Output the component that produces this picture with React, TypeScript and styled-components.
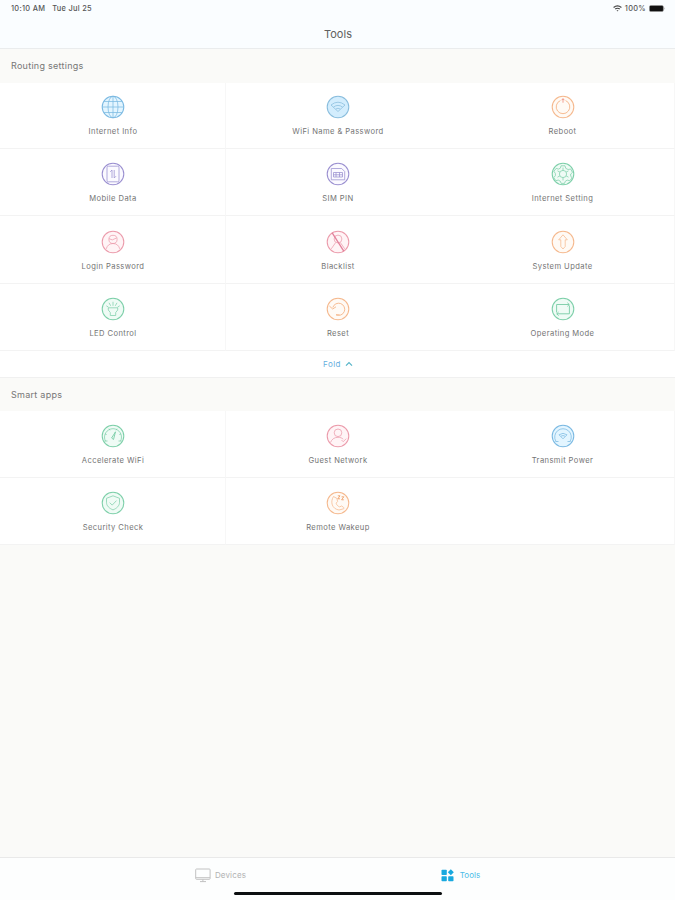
import React from "react";
import styled, { createGlobalStyle } from "styled-components";

const GlobalStyle = createGlobalStyle`
  * { box-sizing: border-box; }
  body { margin: 0; background: #fafaf8; font-family: Inter, "Liberation Sans", sans-serif; }
`;

const Screen = styled.div`
  width: 100%;
  height: 900px;
  display: flex;
  flex-direction: column;
  overflow: hidden;
  background: #fafaf8;
`;

const Header = styled.header`
  height: 49px;
  flex: none;
  display: flex;
  flex-direction: column;
  background: #fafdff;
  border-bottom: 1px solid #eaeced;
`;

const StatusBar = styled.div`
  height: 17px;
  flex: none;
  display: flex;
  align-items: center;
  justify-content: space-between;
  padding: 0 9px 0 11px;
  font-size: 7.4px;
  font-weight: 500;
  letter-spacing: 0.3px;
  color: #555;
`;

const StatusGroup = styled.div<{ $gap: number }>`
  display: flex;
  align-items: center;
  gap: ${(p) => p.$gap}px;
`;

const Title = styled.h1`
  margin: 0;
  height: 31px;
  flex: none;
  line-height: 34px;
  padding-left: 1px;
  text-align: center;
  font-size: 11px;
  font-weight: 400;
  letter-spacing: 0.05px;
  color: #606060;
`;

const SectionTitle = styled.h2<{ $height: number }>`
  margin: 0;
  flex: none;
  height: ${(p) => p.$height}px;
  line-height: ${(p) => p.$height}px;
  padding-left: 11px;
  font-size: 9px;
  font-weight: 400;
  letter-spacing: 0.27px;
  color: #777;
`;

const Grid = styled.div<{ $rows: string }>`
  flex: none;
  display: grid;
  grid-template-columns: 226px 224px 225px;
  grid-template-rows: ${(p) => p.$rows};
  background: #fff;
`;

const Cell = styled.div`
  display: flex;
  flex-direction: column;
  align-items: center;
  justify-content: flex-end;
  padding: 0 0 9px 1px;
  border-right: 1px solid #f7f7f7;
  border-bottom: 1px solid #f3f3f3;

  &:nth-child(3n + 2) {
    padding-left: 0;
    border-right: 0;
  }
`;

const Label = styled.span`
  margin-top: 6px;
  height: 14px;
  line-height: 14px;
  font-size: 7.6px;
  letter-spacing: 0.41px;
  white-space: nowrap;
  color: #747474;
`;

const FoldBar = styled.div`
  flex: none;
  height: 27px;
  display: flex;
  align-items: center;
  justify-content: center;
  gap: 4px;
  padding-left: 1px;
  background: #fff;
  border-bottom: 1px solid #f0f0f0;
  font-size: 8px;
  letter-spacing: 0.45px;
  color: #66aede;
`;

const Footer = styled.footer`
  flex: none;
  margin-top: auto;
  height: 43px;
  display: flex;
  flex-direction: column;
  align-items: center;
  background: #fdfefe;
  border-top: 1px solid #e9e9e9;
`;

const Tabs = styled.nav`
  width: 100%;
  height: 34px;
  flex: none;
  display: grid;
  grid-template-columns: 220px 220px;
  column-gap: 20px;
  justify-content: center;
  padding-left: 6px;
`;

const Tab = styled.div<{ $active?: boolean }>`
  display: flex;
  align-items: center;
  justify-content: center;
  gap: ${(p) => (p.$active ? 6 : 4)}px;
  font-size: 8px;
  letter-spacing: ${(p) => (p.$active ? 0.05 : 0.15)}px;
  color: ${(p) => (p.$active ? "#4cbce8" : "#b2b2b2")};
`;

const HomeIndicator = styled.div`
  width: 208px;
  height: 3px;
  flex: none;
  border-radius: 2px;
  background: #0c0f10;
`;

const palette = {
  blue: ["#7bb9e2", "#e3f5ff"],
  sky: ["#89bddd", "#d3edfd"],
  orange: ["#f5b88d", "#fffaf5"],
  purple: ["#9a8fd0", "#fbfaff"],
  green: ["#7dcfa9", "#effbf5"],
  red: ["#eb9bab", "#fff4f6"],
};

type Tone = keyof typeof palette;

const glyphs = {
  globe: (
    <>
      <ellipse cx="12" cy="12" rx="5" ry="10.8" />
      <path d="M12 1v22M1 12h22M3.2 6.5h17.6M3.2 17.5h17.6" />
    </>
  ),
  wifi: <path d="M5 10q7-5.6 14 0l-7 6.5zM7.5 12q4.5-3.2 9 0M9.8 14q2.2-1.5 4.4 0" />,
  reboot: (
    <>
      <path d="M9.4 5.6a6.8 6.8 0 1 0 5.2 0" strokeWidth="0.95" />
      <path d="M12 3.7v4M10.6 5.2L12 3.7l1.4 1.5" stroke="#ee8072" />
    </>
  ),
  mobile: (
    <>
      <rect x="6" y="4.2" width="12" height="15.6" rx="1.5" />
      <path d="M11 16V8L9.2 9.8M13.2 8v8l1.8-1.8" />
    </>
  ),
  sim: (
    <>
      <path d="M5.3 6.5h10.4l3 3v8.3H5.3z" />
      <path d="M7.5 10.5h9v4.5h-9zM10 10.5V15M13.5 10.5V15M7.5 12.8h9" />
    </>
  ),
  gear: (
    <>
      <circle cx="12" cy="12" r="3.6" />
      <path d="M10 3.8h4l.8 2.6 2.3 1.1 2.6-.5 1.8 3.4-1.8 1.6v2l1.4 2-2.4 2.7-2.5-.6-2 1.3-.7 2h-3.3l-.9-2.2-2-1.1-2.5.6-2-3.1 1.6-2v-2L2.9 9.2l2.3-2.8 2.4.7 1.8-1z" />
      <path d="M12 5.6v2.8M12 15.6v2.8M6.5 8.8l2.4 1.4M15.1 13.8l2.4 1.4M6.5 15.2l2.4-1.4M15.1 10.2l2.4-1.4" />
    </>
  ),
  user: (
    <>
      <circle cx="12" cy="9.4" r="4.1" />
      <path d="M5.3 18.8c.7-3 3-5.3 6.7-5.3s6 2.3 6.7 5.3M8 8.7l3.3 1.2 4.4-2" />
    </>
  ),
  blocked: (
    <>
      <circle cx="12" cy="9" r="3.9" />
      <path d="M5.3 18.8l4.4-6.3M14.3 12.5l4.4 6.3" />
      <path d="M6.2 2.9l11.6 18.2" strokeWidth="1.3" stroke="#e2809b" />
    </>
  ),
  update: <path d="M12 4.8l4.3 5h-2.1v6.7L12 19l-2.2-2.5V9.8H7.7z" />,
  bulb: (
    <>
      <path d="M9.3 18.5v-3L7.3 13v-2.2h9.4V13l-2 2.5v3z" />
      <path d="M12 4.8v4M8 5.8l1.7 3M16 5.8l-1.7 3M5.3 8.8l2.2 1.4M18.7 8.8l-2.2 1.4" />
    </>
  ),
  reset: (
    <>
      <path d="M6.8 10.5A6.1 6.1 0 1 1 10 17.8h3.5" strokeWidth="0.95" />
      <path d="M3.4 9l3.3 3 3.3-2.2" strokeWidth="0.95" />
    </>
  ),
  mode: (
    <>
      <path d="M5.6 15.5V7.5H18M18.4 8.5v8.3H6" strokeWidth="0.95" />
      <path d="M16.4 5.8L18.3 7.5l-1.9 1.8M7.6 15L5.7 16.8l1.9 1.8" strokeWidth="0.95" />
    </>
  ),
  gauge: (
    <>
      <path d="M4.5 17.2a8.5 8.5 0 1 1 15 0M3.5 17h3M17.5 17h3" />
      <path d="M14.5 7.8l-3.9 6.2 1.9 1.5z" strokeWidth="0.95" />
      <path d="M8 4.6l1 1.7M16 4.6l-1 1.7M4 10l1.7.5M20 10l-1.7.5" />
    </>
  ),
  guest: (
    <>
      <circle cx="12" cy="8.8" r="3.8" />
      <path d="M4.5 18.5c1.2-3 3.5-5.2 7.5-5.2 2.5 0 4 .7 5.2 1.9M15.5 16l1.7 1.7 3-3" />
    </>
  ),
  power: (
    <>
      <path d="M5 17.5a8.3 8.3 0 1 1 14 0M4.5 17.5h3M16.5 17.5h3" />
      <path d="M8 10.8q4-3 8 0l-4 4zM10 12.2q2-1.4 4 0" />
    </>
  ),
  shield: (
    <>
      <path d="M12 4.8l6.5 2.5v4c0 3.5-2.6 6-6.5 7.6-3.9-1.6-6.5-4.1-6.5-7.6v-4z" />
      <path d="M8.7 11.7l2.5 2.4 4.3-4.5" />
    </>
  ),
  wake: (
    <>
      <path d="M7.5 5.5C4 11 6 18 13 19l4.5-1.2c.8-.3.7-1 .1-1.4l-2-1.4-2 .9c-2-.9-3-2-3.5-3.8l1.5-1.5-.7-3.2z" />
      <path d="M11.8 4.8h2.2l-2.2 3H14M15.6 5.8h2.2l-2.2 3h2.2" stroke="#ee9253" />
    </>
  ),
};

interface Tool {
  label: string;
  glyph: keyof typeof glyphs;
  tone: Tone;
}

const routing: Tool[] = [
  { label: "Internet Info", glyph: "globe", tone: "blue" },
  { label: "WiFi Name & Password", glyph: "wifi", tone: "sky" },
  { label: "Reboot", glyph: "reboot", tone: "orange" },
  { label: "Mobile Data", glyph: "mobile", tone: "purple" },
  { label: "SIM PIN", glyph: "sim", tone: "purple" },
  { label: "Internet Setting", glyph: "gear", tone: "green" },
  { label: "Login Password", glyph: "user", tone: "red" },
  { label: "Blacklist", glyph: "blocked", tone: "red" },
  { label: "System Update", glyph: "update", tone: "orange" },
  { label: "LED Control", glyph: "bulb", tone: "green" },
  { label: "Reset", glyph: "reset", tone: "orange" },
  { label: "Operating Mode", glyph: "mode", tone: "green" },
];

const smart: Tool[] = [
  { label: "Accelerate WiFi", glyph: "gauge", tone: "green" },
  { label: "Guest Network", glyph: "guest", tone: "red" },
  { label: "Transmit Power", glyph: "power", tone: "blue" },
  { label: "Security Check", glyph: "shield", tone: "green" },
  { label: "Remote Wakeup", glyph: "wake", tone: "orange" },
];

function ToolCell({ label, glyph, tone }: Tool) {
  const [stroke, fill] = palette[tone];
  return (
    <Cell>
      <svg width="24" height="24" viewBox="0 0 24 24" fill="none" stroke={stroke} strokeWidth="0.75">
        <circle cx="12" cy="12" r="10.8" fill={fill} strokeWidth="1.05" />
        {glyphs[glyph]}
      </svg>
      <Label>{label}</Label>
    </Cell>
  );
}

export default function App() {
  return (
    <Screen>
      <GlobalStyle />
      <Header>
        <StatusBar>
          <StatusGroup $gap={7}>
            <span>10:10 AM</span>
            <span>Tue Jul 25</span>
          </StatusGroup>
          <StatusGroup $gap={3}>
            <svg width="9" height="7" viewBox="0 0 9 7" fill="none" stroke="#444" strokeWidth="1.2">
              <path d="M.6 2.4q3.9-3 7.8 0M2.2 4.1q2.3-1.7 4.6 0" />
              <path d="M3.5 5.2h2l-1 1.2z" fill="#444" stroke="none" />
            </svg>
            <span>100%</span>
            <svg width="17" height="7" viewBox="0 0 17 7">
              <rect x=".4" y=".4" width="14" height="6.2" rx="1.5" fill="#111" stroke="#999" strokeWidth=".6" />
              <path d="M15.4 2.3q1.5 1.2 0 2.4z" fill="#aaa" />
            </svg>
          </StatusGroup>
        </StatusBar>
        <Title>Tools</Title>
      </Header>

      <SectionTitle $height={34}>Routing settings</SectionTitle>
      <Grid $rows="66px 67px 68px 67px">
        {routing.map((t) => (
          <ToolCell key={t.label} {...t} />
        ))}
      </Grid>
      <FoldBar>
        <span>Fold</span>
        <svg width="8" height="6" viewBox="0 0 8 6" fill="none" stroke="#55b4c8" strokeWidth="1.2">
          <path d="M1 4.6L4 1.6l3 3" />
        </svg>
      </FoldBar>

      <SectionTitle $height={33}>Smart apps</SectionTitle>
      <Grid $rows="67px 67px">
        {smart.map((t) => (
          <ToolCell key={t.label} {...t} />
        ))}
        <Cell />
      </Grid>

      <Footer>
        <Tabs>
          <Tab>
            <svg width="16" height="15" viewBox="0 0 16 15" fill="none" stroke="#c2c2c2">
              <rect x=".7" y="1" width="14.4" height="10.3" rx=".8" />
              <path d="M.7 9.7h14.4M5 13.6h6M7.9 11.3v2.3" />
            </svg>
            <span>Devices</span>
          </Tab>
          <Tab $active>
            <svg width="13" height="13" viewBox="0 0 13 13" fill="#18a9df">
              <rect x=".5" y=".7" width="5.3" height="5.3" rx=".8" />
              <rect x=".5" y="7.2" width="5.3" height="5.1" rx=".8" />
              <rect x="7.2" y="7.2" width="5.3" height="5.1" rx=".8" />
              <path d="M9.8.2l3 3-3 3-3-3z" />
            </svg>
            <span>Tools</span>
          </Tab>
        </Tabs>
        <HomeIndicator />
      </Footer>
    </Screen>
  );
}
